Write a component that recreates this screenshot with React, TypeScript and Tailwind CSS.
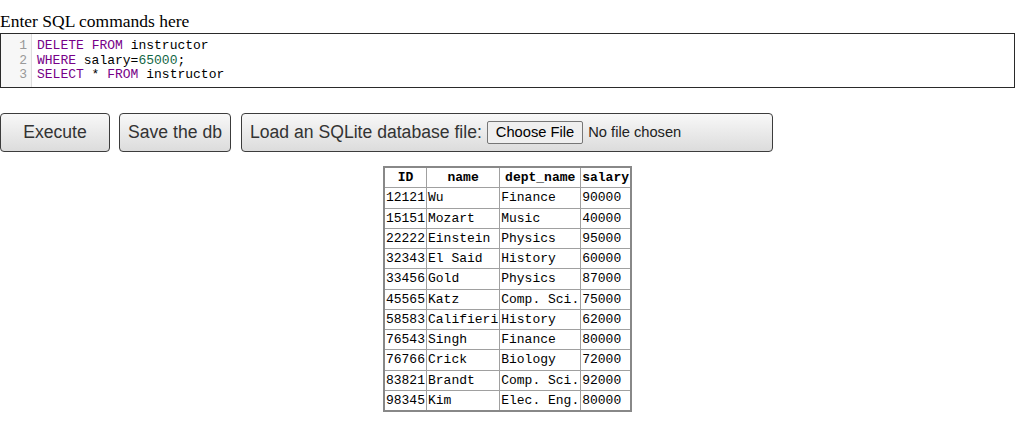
import React from "react";

const ROWS = [
  ["12121", "Wu", "Finance", "90000"],
  ["15151", "Mozart", "Music", "40000"],
  ["22222", "Einstein", "Physics", "95000"],
  ["32343", "El Said", "History", "60000"],
  ["33456", "Gold", "Physics", "87000"],
  ["45565", "Katz", "Comp. Sci.", "75000"],
  ["58583", "Califieri", "History", "62000"],
  ["76543", "Singh", "Finance", "80000"],
  ["76766", "Crick", "Biology", "72000"],
  ["83821", "Brandt", "Comp. Sci.", "92000"],
  ["98345", "Kim", "Elec. Eng.", "80000"],
];

const mono = "font-['Liberation_Mono',monospace]";
const btn =
  "h-[39px] rounded-[4px] border border-[#3c3c3c] bg-gradient-to-b from-[#f8f8f8] to-[#dcdcdc] font-['Liberation_Sans',Arial,sans-serif] text-[17.6px] text-[#333]";

export default function App() {
  return (
    <div className="min-h-[426px] bg-white">
      <div className="w-[1015px]">
        {/* title */}
        <div className="pt-[11px] font-['Liberation_Serif',serif] text-[17.5px] leading-[20px] text-black">
          Enter SQL commands here
        </div>

        {/* editor */}
        <div className={`mt-[2px] flex h-[55px] border border-[#2a2a2a] ${mono} text-[13px] leading-[14.5px]`}>
          <div className="w-[31px] shrink-0 border-r border-[#ddd] bg-[#f7f7f7] pt-[5px] pr-[4px] text-right text-[#999]">
            <div>1</div>
            <div>2</div>
            <div>3</div>
          </div>
          <div className="pt-[5px] pl-[5px] text-black">
            <div>
              <span className="text-[#708]">DELETE</span> <span className="text-[#708]">FROM</span> instructor
            </div>
            <div>
              <span className="text-[#708]">WHERE</span> salary=<span className="text-[#164]">65000</span>;
            </div>
            <div>
              <span className="text-[#708]">SELECT</span> * <span className="text-[#708]">FROM</span> instructor
            </div>
          </div>
        </div>

        {/* buttons */}
        <div className="mt-[25px] flex items-center">
          <button className={`${btn} w-[110px]`}>Execute</button>
          <button className={`${btn} ml-[9px] w-[112px]`}>Save the db</button>
          <div className={`${btn} ml-[10px] flex w-[532px] items-center pl-[8px]`}>
            <span>Load an SQLite database file:</span>
            <span className="ml-[5px] flex h-[23px] items-center rounded-[2px] border border-[#767676] bg-[#efefef] px-[8px] text-[14.7px] text-black">
              Choose File
            </span>
            <span className="ml-[5px] text-[14.7px] text-[#222]">No file chosen</span>
          </div>
        </div>

        {/* result table */}
        <table className={`mx-auto mt-[14px] border-collapse border-2 border-[#888] ${mono} text-[13px] leading-[19.25px] text-black`}>
          <thead>
            <tr>
              {["ID", "name", "dept_name", "salary"].map((h) => (
                <th key={h} className="border border-[#a0a0a0] px-px text-center font-bold">
                  {h}
                </th>
              ))}
            </tr>
          </thead>
          <tbody>
            {ROWS.map((r) => (
              <tr key={r[0]}>
                {r.map((c, i) => (
                  <td key={i} className="whitespace-pre border border-[#a0a0a0] px-px text-left">
                    {c}
                  </td>
                ))}
              </tr>
            ))}
          </tbody>
        </table>
      </div>
    </div>
  );
}
